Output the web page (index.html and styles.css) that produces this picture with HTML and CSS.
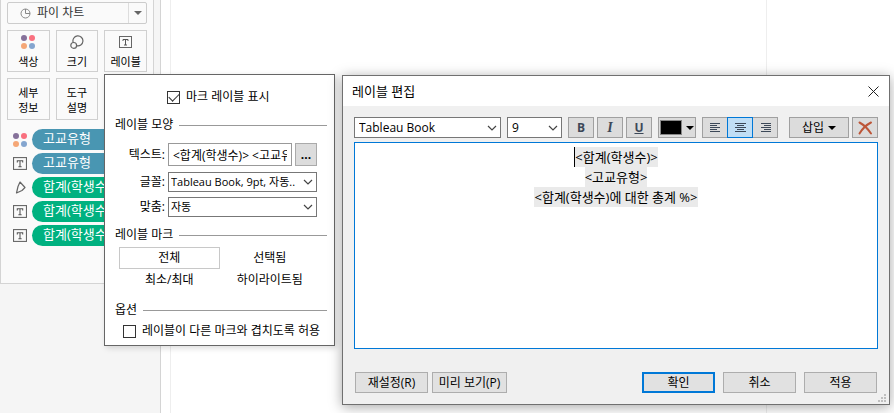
FILE: index.html
```html
<!DOCTYPE html>
<html lang="ko">

<head>
    <meta charset="UTF-8">
    <meta name="viewport" content="width=device-width, initial-scale=1.0">
    <title>레이블 편집</title>
    <link rel="stylesheet" href="styles.css">
</head>

<body>
    <svg class="symbols" width="0" height="0" aria-hidden="true">
        <symbol id="dots" viewBox="0 0 14 14">
            <circle cx="3" cy="3" r="3" fill="#86719a" />
            <circle cx="11" cy="3" r="3" fill="#f9707f" />
            <circle cx="3" cy="11" r="3" fill="#f5a777" />
            <circle cx="11" cy="11" r="3" fill="#84a5cf" />
        </symbol>
        <symbol id="label" viewBox="0 0 13 12">
            <rect x="0.5" y="0.5" width="12" height="11" fill="none" stroke="#666" />
            <path d="M4 5V3.500h5V5M6.500 3.500v5.500M5 9h3" fill="none" stroke="#555" />
        </symbol>
        <symbol id="chevron" viewBox="0 0 10 6">
            <path d="M1 1l4 4 4-4" fill="none" stroke="#444" stroke-width="1.200" />
        </symbol>
    </svg>

    <div class="workspace">
        <aside class="sidebar">
            <div class="marks-card">
                <button class="mark-type">
                    <svg width="11" height="11" viewBox="0 0 11 11" fill="none" stroke="#888">
                        <circle cx="5.500" cy="5.500" r="4.500" />
                        <path d="M5.500 1v4.500H10" />
                    </svg>
                    <span class="mark-name">파이 차트</span>
                    <span class="mark-arrow"><span class="triangle"></span></span>
                </button>
                <div class="shelf-buttons">
                    <button>
                        <svg width="14" height="14"><use href="#dots" /></svg>
                        색상
                    </button>
                    <button>
                        <svg width="16" height="14" viewBox="0 0 16 14" fill="none" stroke="#666" stroke-width="1.200">
                            <path d="M4.200 7.500A5 5 0 1 1 7.600 10.700" />
                            <circle cx="4.700" cy="10.400" r="2.900" />
                        </svg>
                        크기
                    </button>
                    <button>
                        <svg width="13" height="14"><use href="#label" /></svg>
                        레이블
                    </button>
                    <button>세부<br>정보</button>
                    <button>도구<br>설명</button>
                </div>
                <ul class="pills">
                    <li>
                        <svg width="14" height="14"><use href="#dots" /></svg>
                        <span class="pill dimension">고교유형</span>
                    </li>
                    <li>
                        <svg width="14" height="13"><use href="#label" /></svg>
                        <span class="pill dimension">고교유형</span>
                    </li>
                    <li>
                        <svg width="14" height="13" viewBox="0 0 14 13" fill="none" stroke="#666" stroke-width="1.200">
                            <path d="M7 1l5 5.500L9 9.500 3.500 12 5 5.500z" stroke-linejoin="round" />
                        </svg>
                        <span class="pill measure">합계(학생수)</span>
                    </li>
                    <li>
                        <svg width="14" height="13"><use href="#label" /></svg>
                        <span class="pill measure">합계(학생수)</span>
                    </li>
                    <li>
                        <svg width="14" height="13"><use href="#label" /></svg>
                        <span class="pill measure">합계(학생수)</span>
                    </li>
                </ul>
            </div>
        </aside>
        <main class="canvas">
            <div class="view"></div>
        </main>
    </div>

    <section class="popup" aria-label="레이블">
        <label class="check show-labels">
            <input type="checkbox" checked>
            마크 레이블 표시
        </label>

        <h2>레이블 모양</h2>
        <div class="field-row text-row">
            <label for="labelText">텍스트:</label>
            <input type="text" id="labelText" value="<합계(학생수)> <고교유형>">
            <button class="more" aria-label="텍스트 편집">...</button>
        </div>
        <div class="field-row">
            <label for="labelFont">글꼴:</label>
            <div class="select">
                <select id="labelFont">
                    <option>Tableau Book, 9pt, 자동..</option>
                </select>
                <svg width="10" height="6"><use href="#chevron" /></svg>
            </div>
        </div>
        <div class="field-row">
            <label for="labelAlign">맞춤:</label>
            <div class="select">
                <select id="labelAlign">
                    <option>자동</option>
                </select>
                <svg width="10" height="6"><use href="#chevron" /></svg>
            </div>
        </div>

        <h2>레이블 마크</h2>
        <div class="mark-options">
            <button class="selected">전체</button>
            <button>선택됨</button>
            <button>최소/최대</button>
            <button>하이라이트됨</button>
        </div>

        <h2>옵션</h2>
        <label class="check overlap">
            <input type="checkbox">
            레이블이 다른 마크와 겹치도록 허용
        </label>
    </section>

    <section class="dialog" role="dialog" aria-labelledby="dialogTitle">
        <header>
            <h1 id="dialogTitle">레이블 편집</h1>
            <button class="close" aria-label="닫기">
                <svg width="11" height="11" viewBox="0 0 11 11" stroke="#222">
                    <path d="M0.500 0.500l10 10M10.500 0.500l-10 10" />
                </svg>
            </button>
        </header>

        <div class="dialog-body">
            <div class="toolbar">
                <div class="select font-family">
                    <select aria-label="글꼴">
                        <option>Tableau Book</option>
                    </select>
                    <svg width="10" height="6"><use href="#chevron" /></svg>
                </div>
                <div class="select font-size">
                    <select aria-label="크기">
                        <option>9</option>
                    </select>
                    <svg width="10" height="6"><use href="#chevron" /></svg>
                </div>
                <div class="text-styles">
                    <button class="bold">B</button>
                    <button class="italic">I</button>
                    <button class="underline">U</button>
                </div>
                <button class="color" aria-label="색상">
                    <span class="swatch"></span>
                    <span class="triangle"></span>
                </button>
                <div class="alignment">
                    <button aria-label="왼쪽">
                        <svg width="11" height="9" viewBox="0 0 11 9" stroke="#3c4858">
                            <path d="M0 0.500h10M0 2.500h7M0 4.500h10M0 6.500h7M0 8.500h10" />
                        </svg>
                    </button>
                    <button class="active" aria-label="가운데">
                        <svg width="11" height="9" viewBox="0 0 11 9" stroke="#3c4858">
                            <path d="M0 0.500h11M2 2.500h7M0 4.500h11M2 6.500h7M0 8.500h11" />
                        </svg>
                    </button>
                    <button aria-label="오른쪽">
                        <svg width="11" height="9" viewBox="0 0 11 9" stroke="#3c4858">
                            <path d="M1 0.500h10M4 2.500h7M1 4.500h10M4 6.500h7M1 8.500h10" />
                        </svg>
                    </button>
                </div>
                <button class="insert">삽입 <span class="triangle"></span></button>
                <button class="clear" aria-label="지우기">
                    <svg width="15" height="14" viewBox="0 0 15 14" fill="none" stroke="#bd5638" stroke-linecap="round">
                        <path d="M1.500 1.500Q8 5 13 12.500" stroke-width="2" />
                        <path d="M13 1.500Q6 5 1.500 12.500" stroke-width="2" />
                    </svg>
                </button>
            </div>

            <div class="editor" contenteditable="true" role="textbox" aria-multiline="true" aria-label="레이블 텍스트">
                <div><span class="token caret">&lt;합계(학생수)&gt;</span></div>
                <div><span class="token">&lt;고교유형&gt;</span></div>
                <div><span class="token">&lt;합계(학생수)에 대한 총계 %&gt;</span></div>
            </div>

            <footer>
                <button>재설정(R)</button>
                <button>미리 보기(P)</button>
                <button class="primary">확인</button>
                <button>취소</button>
                <button>적용</button>
            </footer>
        </div>
        <svg class="grip" width="8" height="8" viewBox="0 0 8 8" fill="#bfbfbf">
            <path d="M6 0h2v2H6zM3 3h2v2H3zM6 3h2v2H6zM0 6h2v2H0zM3 6h2v2H3zM6 6h2v2H6z" />
        </svg>
    </section>
</body>

</html>
```
FILE: styles.css
```css
* {
    box-sizing: border-box;
}

body {
    margin: 0;
    font-family: "Open Sans", "Noto Sans CJK KR", sans-serif;
    font-size: 12px;
    line-height: 16px;
    color: #000;
    overflow: hidden;
}

button,
input,
select {
    margin: 0;
    padding: 0;
    font: inherit;
    color: inherit;
}

svg {
    flex: none;
}

.symbols {
    position: absolute;
}

.workspace {
    display: flex;
    min-height: 100vh;
}

.sidebar {
    width: 161px;
    background-color: #f5f5f5;
    border-right: 1px solid #d4d4d4;
}

.marks-card {
    width: 154px;
    height: 284px;
    padding: 2px 6px;
    background-color: #fafafa;
    border: 1px solid #d4d4d4;
    border-top: none;
}

.canvas {
    flex: 1;
    display: flex;
    padding-left: 9px;
    background-color: #fff;
}

.view {
    flex: 1;
    max-width: 597px;
    border-left: 1px solid #eee;
    border-right: 1px solid #eee;
}

.triangle {
    display: inline-block;
    border: 4px solid transparent;
    border-top-color: currentColor;
    border-bottom: none;
}

/* Marks card */
.mark-type {
    display: flex;
    align-items: center;
    width: 100%;
    height: 22px;
    padding-left: 12px;
    background-color: #fafafa;
    border: 1px solid #ccc;
    border-radius: 2px;
    color: #333;
}

.mark-name {
    flex: 1;
    padding-left: 6px;
    text-align: left;
}

.mark-arrow {
    display: flex;
    align-items: center;
    justify-content: center;
    width: 18px;
    height: 100%;
    border-left: 1px solid #ddd;
    color: #666;
}

.shelf-buttons {
    display: grid;
    grid-template-columns: repeat(3, 1fr);
    gap: 6px;
    margin-top: 6px;
}

.shelf-buttons button {
    display: flex;
    flex-direction: column;
    align-items: center;
    justify-content: center;
    gap: 5px;
    height: 42px;
    padding-top: 2px;
    background-color: #fafafa;
    border: 1px solid #d0d0d0;
    font-size: 11px;
    line-height: 15px;
}

.shelf-buttons button:nth-child(n+4) {
    display: block;
}

.pills {
    margin: 9px 0 0;
    padding: 0;
    list-style: none;
    overflow: hidden;
}

.pills li {
    display: flex;
    align-items: center;
    gap: 5px;
    height: 21px;
    margin-bottom: 3px;
    padding-left: 6px;
}

.pill {
    flex: 1;
    height: 21px;
    padding-left: 11px;
    border-radius: 11px;
    font-size: 13px;
    line-height: 19px;
    color: #fff;
    white-space: nowrap;
}

.dimension {
    background-color: #4996b2;
}

.measure {
    background-color: #00b180;
}

/* Shared form parts */
.select {
    display: grid;
    flex: 1;
    align-items: center;
    min-width: 0;
}

.select select {
    grid-area: 1 / 1;
    width: 100%;
    height: 20px;
    padding-left: 2px;
    background-color: #fff;
    border: 1px solid #777;
    border-radius: 0;
    font-size: 11px;
    appearance: none;
}

.select svg {
    grid-area: 1 / 1;
    justify-self: end;
    margin-right: 4px;
    pointer-events: none;
}

.check {
    display: flex;
    align-items: center;
    gap: 6px;
}

.check input {
    display: grid;
    place-content: center;
    width: 13px;
    height: 13px;
    background-color: #fff;
    border: 1px solid #333;
    appearance: none;
}

.check input:checked::before {
    content: "";
    width: 9px;
    height: 5px;
    margin-bottom: 3px;
    border: solid #333;
    border-width: 0 0 1px 1px;
    transform: rotate(-45deg);
}

/* Label popup */
.popup {
    position: absolute;
    top: 74px;
    left: 104px;
    width: 231px;
    padding: 14px 7px 6px 10px;
    background-color: #fff;
    border: 1px solid #666;
    box-shadow: 2px 2px 6px rgba(0, 0, 0, 0.15);
}

.popup h2 {
    display: flex;
    align-items: center;
    gap: 6px;
    margin: 0;
    font-size: 12px;
    font-weight: normal;
}

.popup h2::after {
    content: "";
    flex: 1;
    height: 1px;
    background-color: #999;
}

.show-labels {
    margin-bottom: 12px;
    padding-left: 52px;
}

.field-row {
    display: flex;
    align-items: center;
    gap: 3px;
    margin: 5px 10px 0 0;
}

.field-row label {
    width: 50px;
    text-align: right;
}

.text-row {
    margin-top: 10px;
    margin-bottom: 6px;
}

.text-row input {
    flex: 1;
    min-width: 0;
    height: 23px;
    padding: 0 4px;
    border: 1px solid #999;
}

.more {
    width: 22px;
    height: 23px;
    background-color: #dcdcdc;
    border: 1px solid #aaa;
    font-weight: bold;
    line-height: 14px;
}

.field-row + h2 {
    margin-top: 10px;
}

.mark-options {
    display: grid;
    grid-template-columns: 1fr 1fr;
    margin: 4px 7px 11px 4px;
}

.mark-options button {
    height: 22px;
    background: none;
    border: 1px solid transparent;
}

.mark-options .selected {
    border-color: #c8c8c8;
}

.overlap {
    margin-top: 5px;
    padding-left: 8px;
    white-space: nowrap;
}

/* Edit label dialog */
.dialog {
    position: absolute;
    top: 75px;
    left: 342px;
    right: 4px;
    background-color: #f0f0f0;
    border: 1px solid #707070;
    box-shadow: 0 2px 12px rgba(0, 0, 0, 0.35);
}

.dialog header {
    display: flex;
    align-items: center;
    justify-content: space-between;
    height: 30px;
    padding: 0 10px 0 9px;
    background-color: #fff;
}

.dialog h1 {
    margin: 0;
    font-size: 13px;
    font-weight: normal;
}

.close {
    display: flex;
    background: none;
    border: none;
}

.dialog-body {
    padding: 11px 11px;
}

.toolbar {
    display: flex;
    gap: 6px;
    margin-bottom: 4px;
}

.toolbar button {
    display: flex;
    align-items: center;
    justify-content: center;
    width: 26px;
    height: 21px;
    background-color: #dcdcdc;
    border: 1px solid #a0a0a0;
}

.toolbar .select {
    flex: none;
}

.toolbar select {
    height: 21px;
    padding-left: 4px;
    font-size: 12px;
}

.font-family {
    width: 147px;
}

.font-size {
    width: 55px;
}

.text-styles {
    display: flex;
    gap: 3px;
}

.toolbar .bold,
.toolbar .italic,
.toolbar .underline {
    font-weight: bold;
    color: #3c4858;
}

.toolbar .italic {
    font-family: "Liberation Serif", serif;
    font-size: 14px;
    font-style: italic;
}

.toolbar .underline {
    text-decoration: underline;
}

.toolbar .color {
    gap: 4px;
    width: 38px;
}

.swatch {
    width: 22px;
    height: 15px;
    background-color: #000;
    border: 1px solid #888;
}

.alignment {
    display: flex;
}

.alignment button + button {
    margin-left: -1px;
}

.toolbar .active {
    position: relative;
    background-color: #c0def5;
    border-color: #0078d7;
}

.toolbar .insert {
    gap: 4px;
    width: 60px;
    margin-left: auto;
}

.toolbar .clear {
    margin-left: -3px;
}

.editor {
    min-height: 207px;
    padding: 4px;
    background-color: #fff;
    border: 1px solid #0078d7;
    outline: none;
    font-size: 13px;
    line-height: 20px;
    text-align: center;
}

.token {
    display: inline-block;
    background-color: #eaeaea;
}

.caret {
    border-left: 1px solid #000;
}

.dialog footer {
    display: flex;
    gap: 8px;
    margin-top: 23px;
    padding: 0 1px;
}

.dialog footer button {
    width: 73px;
    height: 21px;
    background-color: #e1e1e1;
    border: 1px solid #adadad;
    line-height: 16px;
}

.dialog footer button:nth-child(2) {
    width: 75px;
    margin-left: -4px;
}

.dialog footer .primary {
    margin-left: auto;
    border: 2px solid #0078d7;
}

.grip {
    position: absolute;
    right: 3px;
    bottom: 2px;
}
```
